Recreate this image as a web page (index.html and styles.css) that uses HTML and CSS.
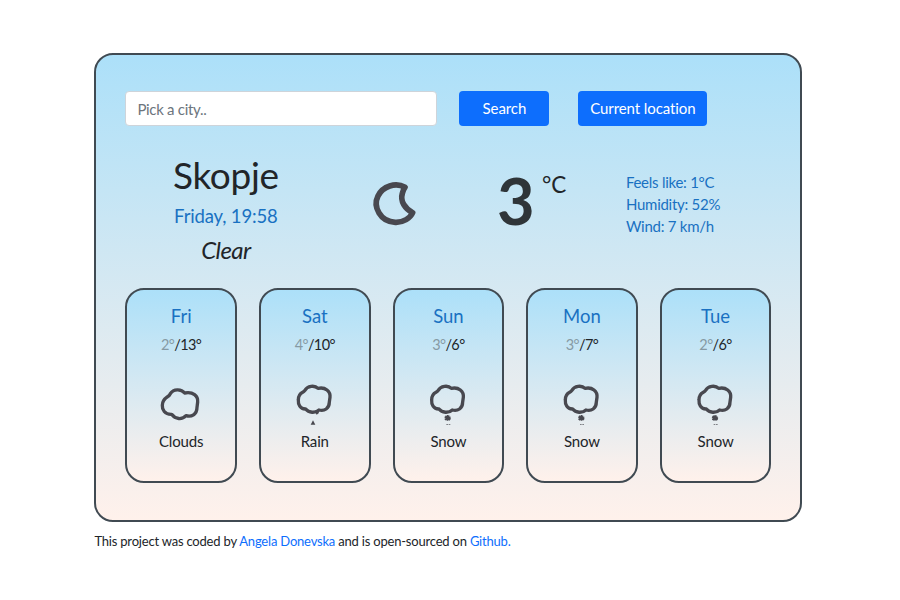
FILE: index.html
```html
<!DOCTYPE html>
<html lang="en">
<head>
<meta charset="utf-8">
<title>Weather</title>
<link rel="stylesheet" href="styles.css">
</head>
<body>
<svg class="defs" width="0" height="0">
  <symbol id="cloud" viewBox="0 0 150 150">
    <path class="line" d="M44 32C52 17 74 15 84 25C106 20 122 34 120 52L118 66C118 86 103 94 87 90C76 100 56 99 47 87C30 88 24 72 25 60C25 44 36 38 38 37Q42 35 44 32Z"/>
  </symbol>
  <symbol id="snow" viewBox="0 0 150 150">
    <use href="#cloud" width="150" height="150"/>
    <path class="flake" d="M73 105v17M64 111l18 6M64 118l18-7M67 121l11-14M67 107l12 14"/>
    <path class="dash" d="M69 133.500h5M76 133.500h5"/>
  </symbol>
</svg>
<main class="app">
  <form class="search">
    <input class="city-input" type="text" placeholder="Pick a city..">
    <button class="btn btn-search" type="button">Search</button>
    <button class="btn btn-location" type="button">Current location</button>
  </form>
  <section class="current">
    <div class="place">
      <h1>Skopje</h1>
      <h2>Friday, 19:58</h2>
      <h3>Clear</h3>
    </div>
    <svg class="moon" viewBox="0 0 150 180"><path d="M105 49C77 33 38 46 24 75C8 107 31 153 76 154C100 155 121 141 128 125C105 113 90 91 97 67Q99 57 105 49Z"/></svg>
    <div class="temperature"><strong>3</strong><span>°C</span></div>
    <ul class="details"><li>Feels like: 1°C</li><li>Humidity: 52%</li><li>Wind: 7 km/h</li></ul>
  </section>
  <section class="forecast">
    <article class="day"><h4>Fri</h4><p class="range"><span>2°</span>/13°</p>
      <svg class="icon" viewBox="-1 0 150 150"><path class="line" d="M39 41C48 26 72 26 82 39C107 34 123 48 121 66L119 82C119 104 102 112 86 107C74 120 54 118 43 103C22 104 14 88 15 76C15 60 27 53 31 50Q36 47 39 41Z"/></svg><p>Clouds</p></article>
    <article class="day"><h4>Sat</h4><p class="range"><span>4°</span>/10°</p>
      <svg class="icon" viewBox="3 0 150 150"><use href="#cloud" width="150" height="150"/><path class="drop" d="M76 90h12l-2 10-6 4-4-6zM69 121l7 13h-14z"/></svg><p>Rain</p></article>
    <article class="day"><h4>Sun</h4><p class="range"><span>3°</span>/6°</p><svg class="icon" viewBox="2 0 150 150"><use href="#snow" width="150" height="150"/></svg><p>Snow</p></article>
    <article class="day"><h4>Mon</h4><p class="range"><span>3°</span>/7°</p><svg class="icon" viewBox="3 0 150 150"><use href="#snow" width="150" height="150"/></svg><p>Snow</p></article>
    <article class="day"><h4>Tue</h4><p class="range"><span>2°</span>/6°</p><svg class="icon" viewBox="4 0 150 150"><use href="#snow" width="150" height="150"/></svg><p>Snow</p></article>
  </section>
</main>
<footer>This project was coded by <a href="#">Angela Donevska</a> and is open-sourced on <a href="#">Github.</a></footer>
</body>
</html>
```
FILE: styles.css
```css
* { box-sizing: border-box; }
body { margin: 0; padding: 53px 0 0 94.400px; background: #fff; color: #212529; font-family: Lato, sans-serif; font-size: 15px; line-height: 22px; }
h1, h2, h3, h4, p, ul { margin: 0; padding: 0; font-weight: 400; }
.defs { display: block; }
.app { width: 708px; height: 469px; padding: 36px 29px 0; border: 2px solid #404a52; border-radius: 19px; background: linear-gradient(#ace0f9, #fff1eb); }
.search { display: flex; align-items: center; }
.city-input { width: 312px; height: 35px; margin: 0 22px 0 0; padding: 0 11px; border: 1px solid #ced4da; border-radius: 4px; background: #fff; font: 15px Lato, sans-serif; letter-spacing: -.3px; }
.city-input::placeholder { color: #6c757d; opacity: 1; }
.btn { height: 35px; padding: 0 0 1px; border: 0; border-radius: 4px; background: #0d6efd; color: #fff; font: 15px Lato, sans-serif; letter-spacing: -.08px; }
.btn-search { width: 90px; margin-right: 29px; }
.btn-location { width: 129px; }
.current { display: flex; height: 162px; }
.place { width: 201px; padding-top: 26px; text-align: center; }
.place h1 { font-size: 37px; line-height: 46px; letter-spacing: -.3px; }
.place h2 { margin-top: 6px; color: #1971c2; font-size: 18.500px; line-height: 24px; letter-spacing: -.15px; }
.place h3 { margin-top: 8px; font-size: 24px; line-height: 28px; font-style: italic; letter-spacing: -.6px; }
.moon { width: 50px; height: 60px; margin: 44.500px 0 0 44px; }
.moon path { fill: none; stroke: #48484f; stroke-width: 17; stroke-linejoin: round; }
.temperature { display: flex; width: 129px; margin-left: 76.500px; color: #2f3539; }
.temperature strong { width: 45px; padding-top: 38px; font-size: 65px; line-height: 72px; }
.temperature span { padding-top: 46px; color: #212529; font-size: 22.500px; line-height: 26px; }
.details { padding-top: 45px; color: #1971c2; list-style: none; letter-spacing: -.26px; }
.forecast { display: flex; gap: 22px; }
.day { width: 111.600px; height: 195px; padding-top: 13px; border: 2px solid #404a52; border-radius: 19px; background: linear-gradient(#ace0f9, #fff1eb); text-align: center; letter-spacing: -.15px; }
.day h4 { color: #1971c2; font-size: 18.500px; line-height: 27px; letter-spacing: 0; }
.day .range { margin-top: 3px; padding-top: 1px; font-size: 14.500px; letter-spacing: -.6px; }
.range span { color: #869aa4; }
.icon { display: block; width: 50px; height: 50px; margin: 24px auto 0; }
.line { fill: none; stroke: #48484f; stroke-width: 10; stroke-linejoin: round; }
.flake { fill: none; stroke: #48484f; stroke-width: 4; }
.dash { fill: none; stroke: #48484f; stroke-width: 2; }
.drop { fill: #48484f; }
.icon { transform: translateX(1px); }
footer { margin-top: 8px; font-size: 13px; letter-spacing: -.2px; }
footer a { color: #0d6efd; text-decoration: none; }
```
